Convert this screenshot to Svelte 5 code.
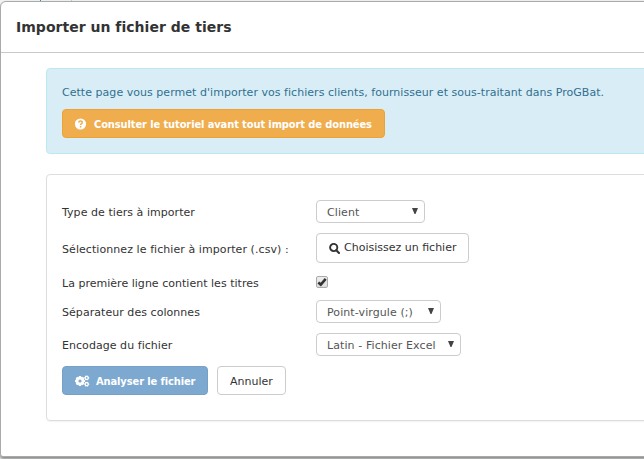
<script>
  const gear = (cx, cy, r, teeth, hole) => {
    const pts = [];
    for (let i = 0; i < teeth; i++) {
      const a = (i * 2 * Math.PI) / teeth;
      for (const [o, k] of [[-0.3, 0.84], [-0.22, 1], [0.22, 1], [0.3, 0.84]]) {
        pts.push(`${(cx + Math.cos(a + o) * r * k).toFixed(2)} ${(cy + Math.sin(a + o) * r * k).toFixed(2)}`);
      }
    }
    const h = r * hole;
    return `M${pts.join('L')}ZM${cx - h} ${cy}a${h} ${h} 0 1 0 ${2 * h} 0a${h} ${h} 0 1 0 ${-2 * h} 0Z`;
  };
  const gears = gear(5, 6, 5.1, 8, 0.31) + gear(11.7, 2.9, 2.6, 6, 0.34) + gear(11.7, 9.2, 2.6, 6, 0.34);
  let titles = $state(true);
</script>

{#snippet picker(value, cls)}
  <button class="select {cls}" type="button">
    <span>{value}</span>
    <svg width="6" height="6" viewBox="0 0 6 6"><path d="M0 0H6L3.5 6H2.5Z" fill="#444" /></svg>
  </button>
{/snippet}

<div class="page">
  <div class="modal">
    <header><h1>Importer un fichier de tiers</h1></header>
    <main>
      <section class="alert">
        <p>Cette page vous permet d'importer vos fichiers clients, fournisseur et sous-traitant dans ProGBat.</p>
        <button class="btn warning" type="button">
          <svg width="12" height="12" viewBox="0 0 12 12">
            <circle cx="5.5" cy="6" r="5.6" fill="#fff" />
            <path d="M3.7 4.6C3.8 2.4 7.4 2.5 7.3 4.5C7.3 5.7 5.6 5.7 5.6 7.1M5.6 8.1V9.5" fill="none" stroke="#f0ad4e" stroke-width="1.5" />
          </svg>
          <span>Consulter le tutoriel avant tout import de données</span>
        </button>
      </section>
      <section class="panel">
        <div class="row r1"><span class="label">Type de tiers à importer</span>{@render picker('Client', 's1')}</div>
        <div class="row r2">
          <span class="label">Sélectionnez le fichier à importer (.csv) :</span>
          <button class="btn plain file" type="button">
            <svg width="11" height="11" viewBox="0 0 11 11"><circle cx="4.7" cy="4.5" r="3.6" fill="none" stroke="#333" stroke-width="1.9" /><path d="M7.3 7.2L10 9.9" stroke="#333" stroke-width="2.1" stroke-linecap="round" /></svg>
            <span>Choisissez un fichier</span>
          </button>
        </div>
        <div class="row r3">
          <span class="label">La première ligne contient les titres</span>
          <button class="check" type="button" role="checkbox" aria-checked={titles} aria-label="La première ligne contient les titres" onclick={() => (titles = !titles)}>
            {#if titles}<svg width="10" height="10" viewBox="0 0 10 10"><path d="M1.3 5.4L3.8 7.6L8.7 1.9" fill="none" stroke="#333" stroke-width="2.6" /></svg>{/if}
          </button>
        </div>
        <div class="row r4"><span class="label">Séparateur des colonnes</span>{@render picker('Point-virgule (;)', 's2')}</div>
        <div class="row r5"><span class="label">Encodage du fichier</span>{@render picker('Latin - Fichier Excel', 's3')}</div>
        <div class="actions">
          <button class="btn primary" type="button">
            <svg width="15" height="12" viewBox="0 0 15 12"><path d={gears} fill="#fff" fill-rule="evenodd" /></svg>
            <span>Analyser le fichier</span>
          </button>
          <button class="btn plain cancel" type="button"><span>Annuler</span></button>
        </div>
      </section>
    </main>
  </div>
</div>

<style>
  :global(body) { overflow: hidden; }
  * { box-sizing: border-box; }
  svg { flex: none; }
  .page {
    height: 459px; padding-top: 1px; overflow: hidden;
    background: linear-gradient(90deg, transparent 40px, #4a86bd 40px 41px, transparent 41px 71px, #a5dcdc 71px 72px, transparent 72px) 0 0 / 100% 1px no-repeat, #f1f3f3;
    font-family: Verdana, "DejaVu Sans", sans-serif; font-size: 11px; color: #333;
  }
  .modal {
    width: 700px; height: 456px; background: #fff;
    border: 1px solid #aaa; border-radius: 6px 6px 3px 3px;
    box-shadow: 0 2px 3px rgba(0, 0, 0, .45);
  }
  header { height: 51px; border-bottom: 1px solid #c8c8c8; padding: 16px 0 0 15px; }
  h1 { margin: 0; font-size: 14px; line-height: 18px; font-weight: 700; letter-spacing: .02px; white-space: nowrap; }
  main { padding: 15px 0 0 45px; }
  .alert { height: 86px; padding: 15px; background: #d9edf7; border: 1px solid #bce8f1; border-radius: 4px; color: #31708f; }
  p { margin: 0 0 8px; height: 17px; line-height: 17px; letter-spacing: .037px; white-space: nowrap; }
  button { font: inherit; color: inherit; margin: 0; padding: 0; white-space: nowrap; }
  .btn { display: flex; align-items: center; height: 29px; border: 1px solid #ccc; border-radius: 4px; line-height: 16px; }
  .btn span { padding-top: 2px; }
  .warning { width: 323px; padding-left: 12px; gap: 7px; color: #fff; background: #f0ad4e; border-color: #eea236; }
  .warning, .primary { font-family: "DejaVu Sans Condensed", "DejaVu Sans", sans-serif; font-stretch: condensed; font-weight: 700; letter-spacing: -.1px; }
  .plain { background: #fff; color: #333; }
  .panel { margin-top: 20px; height: 247px; padding: 25px 15px 0; border: 1px solid #ddd; border-radius: 4px; box-shadow: 0 1px 1px rgba(0, 0, 0, .05); }
  .row { display: flex; align-items: center; }
  .label { width: 254px; flex: none; white-space: nowrap; line-height: 16px; padding-top: 2px; letter-spacing: .05px; }
  .r1 { height: 23px; }
  .r2 { height: 30px; margin-top: 10px; }
  .r2 .label { padding-top: 4px; letter-spacing: .07px; }
  .r3 { height: 13px; margin-top: 13px; }
  .r3 .label { letter-spacing: .02px; }
  .r4 { height: 23px; margin-top: 11px; }
  .r5 { height: 23px; margin-top: 10px; }
  .select { display: flex; justify-content: space-between; height: 23px; padding: 0 6px 0 10px; background: #fff; border: 1px solid #ccc; border-radius: 4px; color: #555; line-height: 23px; letter-spacing: .09px; }
  .select svg { margin-top: 7px; }
  .s1 { width: 109px; }
  .s2 { width: 125px; }
  .s3 { width: 145px; }
  .file { width: 153px; height: 30px; padding-left: 12px; gap: 4px; }
  .btn.file span { padding: 0; margin-top: -1px; }
  .check { width: 12px; height: 12px; align-self: flex-start; display: flex; align-items: center; justify-content: center; border: 1px solid #aaa; border-radius: 2px; background: linear-gradient(#eee, #ddd); }
  .actions { display: flex; gap: 9px; margin-top: 10px; }
  .primary { width: 146px; padding-left: 12px; gap: 6px; color: #fff; background: #7da8d0; border-color: #76a0c8; }
  .cancel { width: 69px; justify-content: center; }
</style>
